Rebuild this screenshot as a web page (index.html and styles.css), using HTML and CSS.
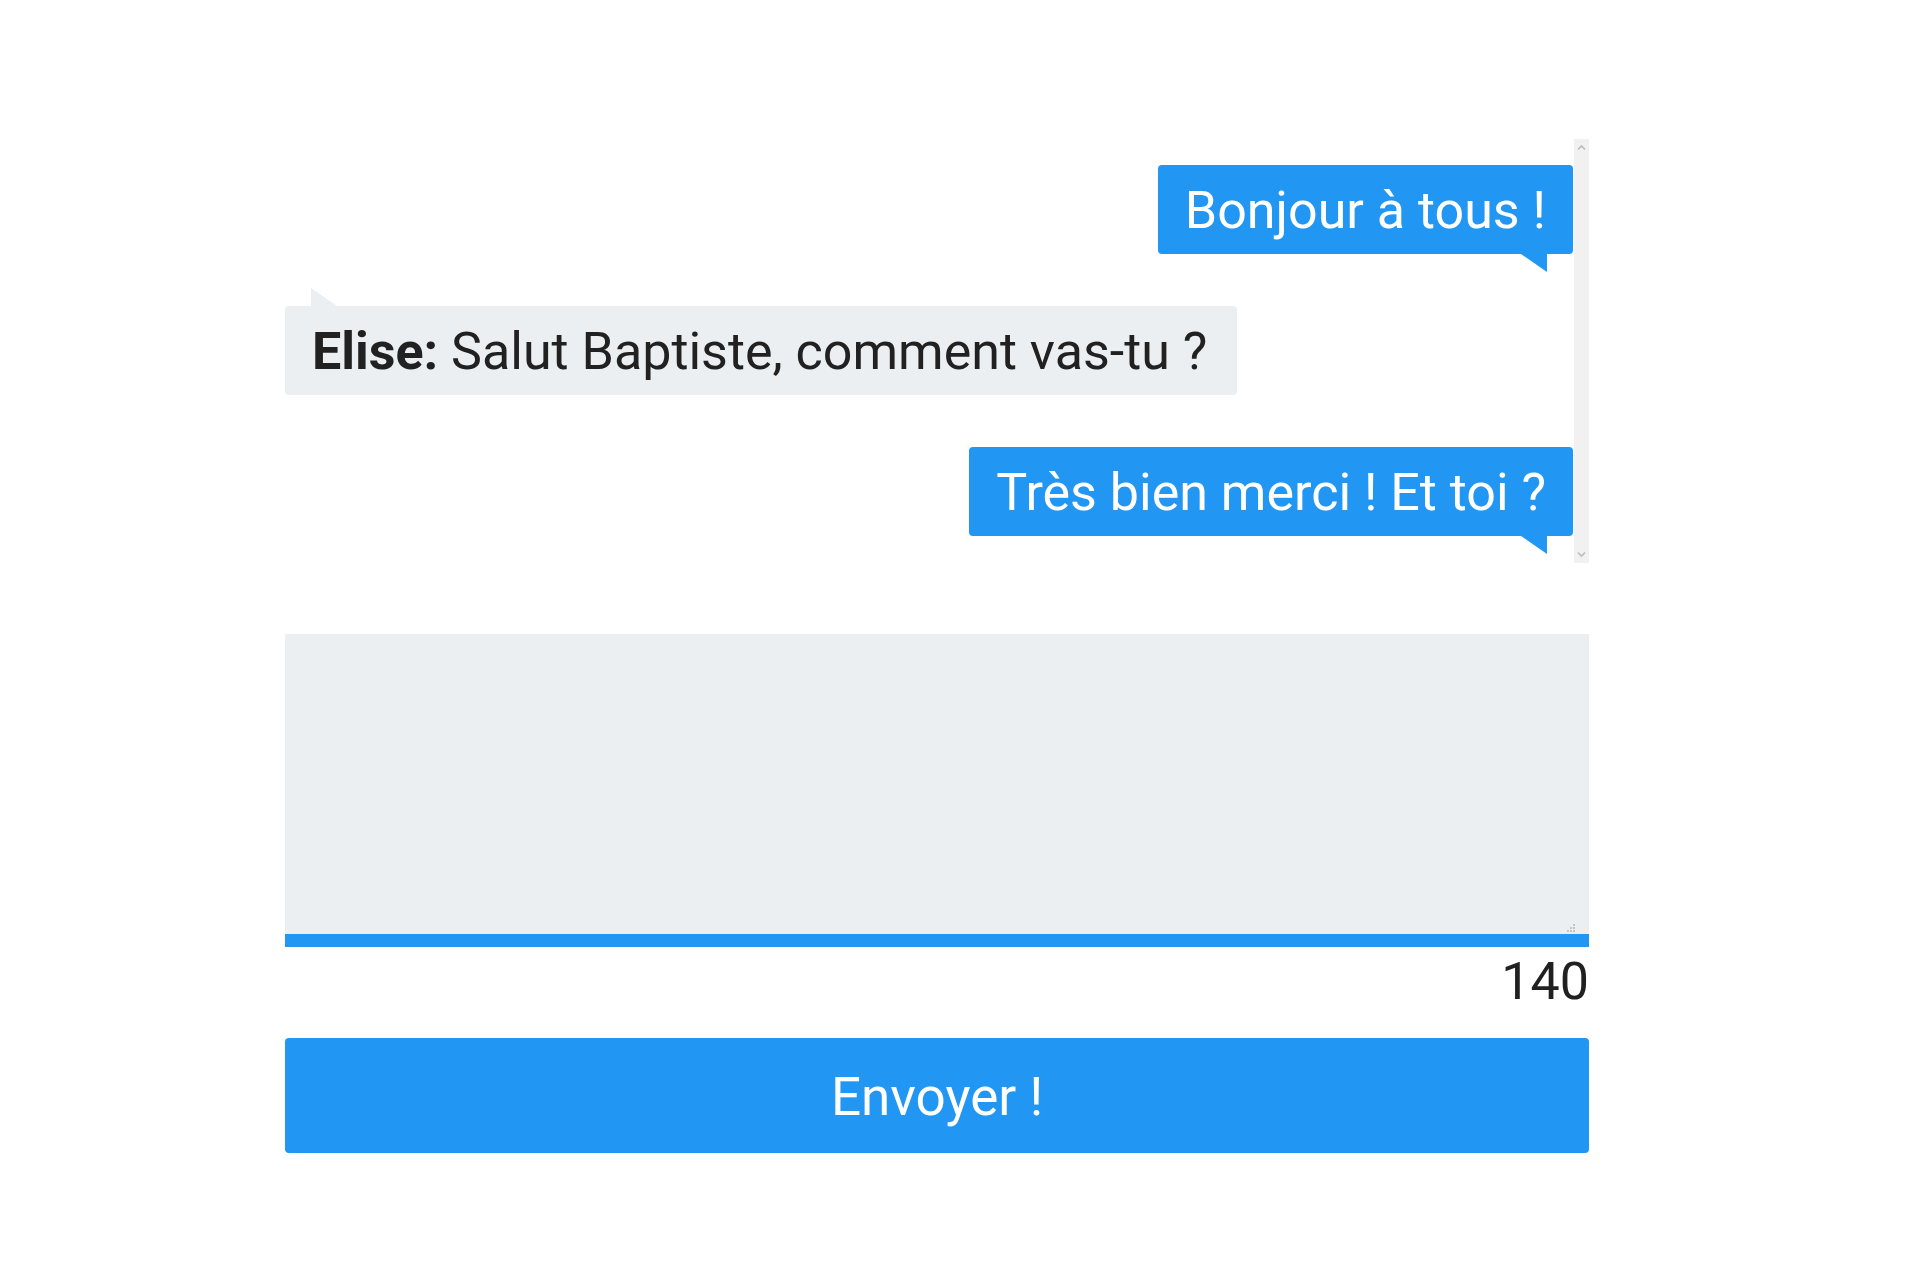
FILE: index.html
```html
<!DOCTYPE html>
<html lang="fr">
<head>
<meta charset="utf-8">
<title>Chat</title>
<link rel="stylesheet" href="styles.css">
</head>
<body>
<div class="app">
  <div class="chat">
    <div class="messages">
      <div class="msg msg-sent">Bonjour à tous !</div>
      <div class="msg msg-received"><strong>Elise:</strong> Salut Baptiste, comment vas-tu ?</div>
      <div class="msg msg-sent">Très bien merci ! Et toi ?</div>
    </div>
    <div class="scrollbar" aria-hidden="true">
      <svg class="arrow" width="15" height="17" viewBox="0 0 15 17"><polyline points="4,10.5 7.5,7 11,10.5" fill="none" stroke="#bcbcbc" stroke-width="1.6"/></svg>
      <svg class="arrow" width="15" height="17" viewBox="0 0 15 17"><polyline points="4,6.5 7.5,10 11,6.5" fill="none" stroke="#bcbcbc" stroke-width="1.6"/></svg>
    </div>
  </div>
  <form class="composer">
    <div class="input-wrap">
      <textarea class="input"></textarea>
      <span class="grip" aria-hidden="true"></span>
    </div>
    <div class="progress"><div class="progress-bar" style="width: 100%"></div></div>
    <div class="counter">140</div>
    <button type="button" class="send">Envoyer !</button>
  </form>
</div>
</body>
</html>
```
FILE: styles.css
```css
html, body {
  margin: 0;
  padding: 0;
  background: #ffffff;
}

body {
  font-family: Roboto, "Liberation Sans", Arial, sans-serif;
  font-size: 52px;
  color: #212121;
}

.app {
  width: 1304px;
  margin-left: 285px;
  padding-top: 139px;
}

.chat {
  display: flex;
  height: 424px;
}

.messages {
  flex: 1;
  min-width: 0;
  box-sizing: border-box;
  overflow: hidden;
  display: flex;
  flex-direction: column;
  gap: 52px;
  padding: 26px 0;
}

.scrollbar {
  width: 15px;
  margin-left: 1px;
  background: #f1f1f1;
  display: flex;
  flex-direction: column;
  justify-content: space-between;
}

.arrow {
  display: block;
}

.msg {
  position: relative;
  line-height: 61px;
  padding: 15px 27px 13px 27px;
  border-radius: 4px;
  white-space: nowrap;
}

.msg-sent {
  align-self: flex-end;
  background: #2196F3;
  color: #ffffff;
}

.msg-sent::after {
  content: "";
  position: absolute;
  right: 26px;
  bottom: -18px;
  width: 0;
  height: 0;
  border-top: 18px solid #2196F3;
  border-left: 26px solid transparent;
}

.msg-received {
  align-self: flex-start;
  background: #ECEFF1;
  color: #212121;
  padding: 15px 30px 13px 27px;
}

.msg-received::before {
  content: "";
  position: absolute;
  left: 26px;
  top: -18px;
  width: 0;
  height: 0;
  border-bottom: 18px solid #ECEFF1;
  border-right: 26px solid transparent;
}

.msg-received strong {
  font-weight: 700;
}

.composer {
  margin: 71px 0 0 0;
  display: flex;
  flex-direction: column;
}

.input-wrap {
  position: relative;
}

.input {
  display: block;
  width: 100%;
  height: 300px;
  box-sizing: border-box;
  margin: 0;
  border: none;
  outline: none;
  resize: none;
  background: #ECEFF1;
  font-family: Roboto, "Liberation Sans", Arial, sans-serif;
  font-size: 52px;
  color: #212121;
  padding: 10px;
}

.grip {
  position: absolute;
  right: 14px;
  bottom: 2px;
  width: 8px;
  height: 8px;
  background:
    linear-gradient(#c4c4c4, #c4c4c4) 6px 0 / 2px 2px no-repeat,
    linear-gradient(#c4c4c4, #c4c4c4) 3px 3px / 2px 2px no-repeat,
    linear-gradient(#c4c4c4, #c4c4c4) 6px 3px / 2px 2px no-repeat,
    linear-gradient(#c4c4c4, #c4c4c4) 0 6px / 2px 2px no-repeat,
    linear-gradient(#c4c4c4, #c4c4c4) 3px 6px / 2px 2px no-repeat,
    linear-gradient(#c4c4c4, #c4c4c4) 6px 6px / 2px 2px no-repeat;
}

.progress {
  height: 13px;
  background: #ECEFF1;
}

.progress-bar {
  height: 100%;
  background: #2196F3;
}

.counter {
  text-align: right;
  line-height: 61px;
  margin-top: 4px;
}

.send {
  margin-top: 26px;
  height: 115px;
  width: 100%;
  border: none;
  border-radius: 4px;
  background: #2196F3;
  color: #ffffff;
  font-family: Roboto, "Liberation Sans", Arial, sans-serif;
  font-size: 53px;
  line-height: 61px;
  padding: 4px 0 0 0;
  cursor: pointer;
}
```
